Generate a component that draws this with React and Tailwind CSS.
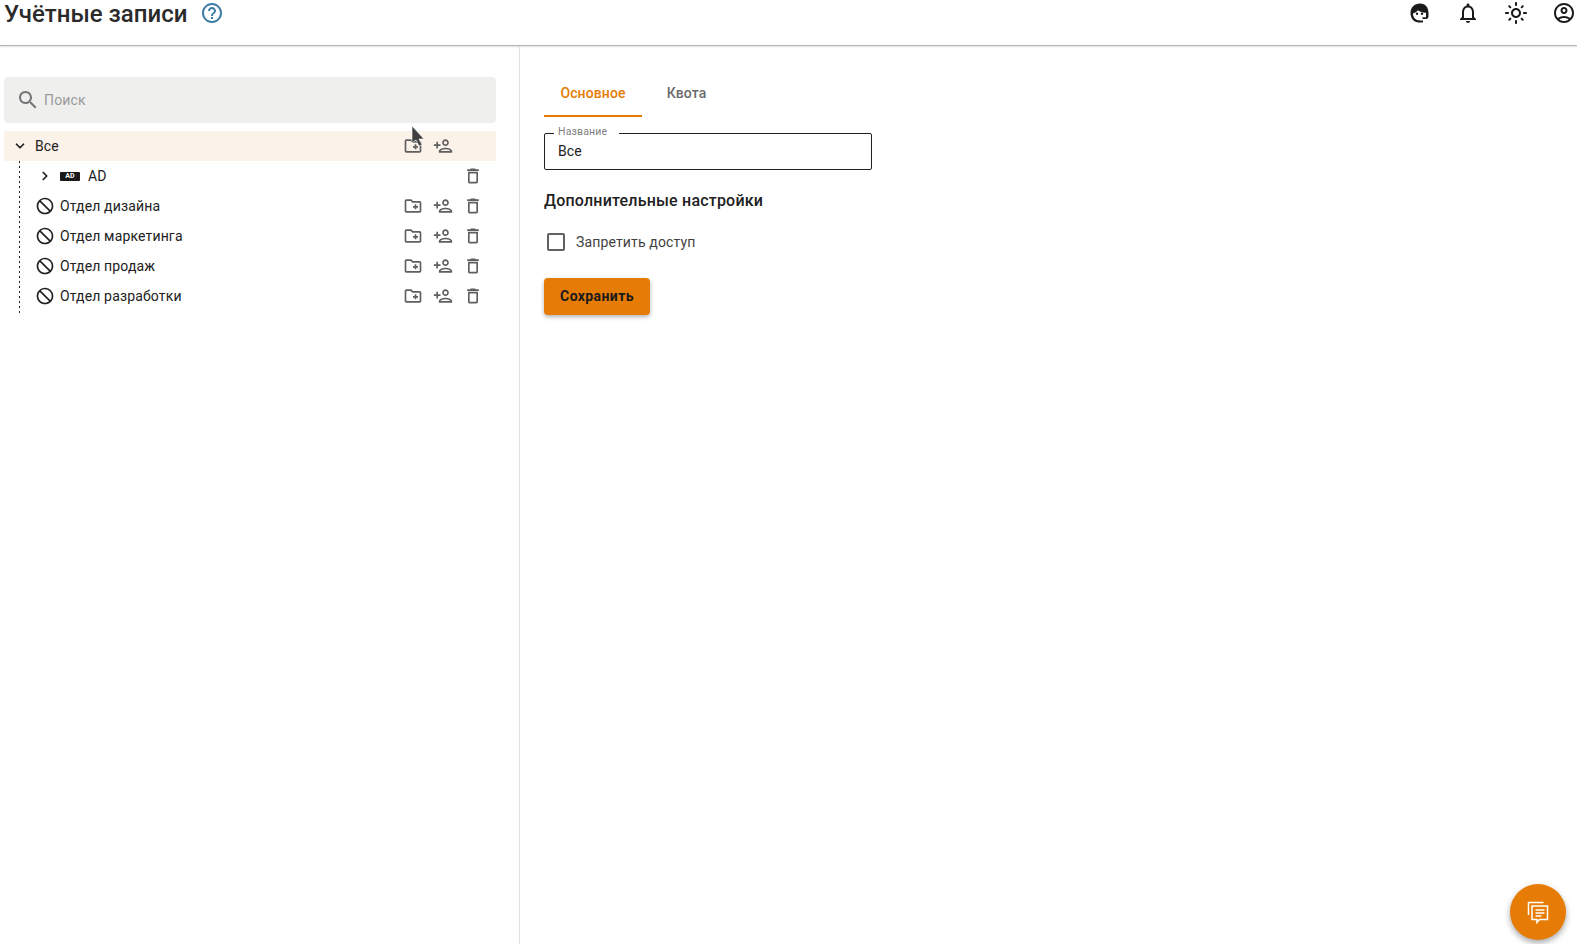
import React from "react";
import { ChevronDown, ChevronRight } from "lucide-react";

const paths = {
  help: "M11 18h2v-2h-2v2zm1-16C6.48 2 2 6.48 2 12s4.48 10 10 10 10-4.48 10-10S17.52 2 12 2zm0 18c-4.41 0-8-3.59-8-8s3.59-8 8-8 8 3.59 8 8-3.59 8-8 8zm0-14c-2.21 0-4 1.79-4 4h2c0-1.1.9-2 2-2s2 .9 2 2c0 2-3 1.75-3 5h2c0-2.25 3-2.5 3-5 0-2.21-1.79-4-4-4z",
  search: "M15.5 14h-.79l-.28-.27C15.41 12.59 16 11.11 16 9.5 16 5.91 13.09 3 9.5 3S3 5.91 3 9.5 5.91 16 9.5 16c1.61 0 3.09-.59 4.23-1.57l.27.28v.79l5 4.99L20.49 19l-4.99-5zm-6 0C7.01 14 5 11.99 5 9.5S7.01 5 9.5 5 14 7.01 14 9.5 11.99 14 9.5 14z",
  bell: "M12 22c1.1 0 2-.9 2-2h-4c0 1.1.9 2 2 2zm6-6v-5c0-3.07-1.63-5.64-4.5-6.32V4c0-.83-.67-1.5-1.5-1.5s-1.5.67-1.5 1.5v.68C7.64 5.36 6 7.92 6 11v5l-2 2v1h16v-1l-2-2zm-2 1H8v-6c0-2.48 1.51-4.5 4-4.5s4 2.02 4 4.5v6z",
  sun: "M12 9c1.65 0 3 1.35 3 3s-1.35 3-3 3-3-1.35-3-3 1.35-3 3-3m0-2c-2.76 0-5 2.24-5 5s2.24 5 5 5 5-2.24 5-5-2.24-5-5-5zM2 13h2c.55 0 1-.45 1-1s-.45-1-1-1H2c-.55 0-1 .45-1 1s.45 1 1 1zm18 0h2c.55 0 1-.45 1-1s-.45-1-1-1h-2c-.55 0-1 .45-1 1s.45 1 1 1zM11 2v2c0 .55.45 1 1 1s1-.45 1-1V2c0-.55-.45-1-1-1s-1 .45-1 1zm0 18v2c0 .55.45 1 1 1s1-.45 1-1v-2c0-.55-.45-1-1-1s-1 .45-1 1zM5.99 4.58c-.39-.39-1.03-.39-1.41 0-.39.39-.39 1.03 0 1.41l1.06 1.06c.39.39 1.03.39 1.41 0s.39-1.03 0-1.41L5.99 4.58zm12.37 12.37c-.39-.39-1.03-.39-1.41 0-.39.39-.39 1.03 0 1.41l1.06 1.06c.39.39 1.03.39 1.41 0 .39-.39.39-1.03 0-1.41l-1.06-1.06zm1.06-10.96c.39-.39.39-1.03 0-1.41-.39-.39-1.03-.39-1.41 0l-1.06 1.06c-.39.39-.39 1.03 0 1.41s1.03.39 1.41 0l1.06-1.06zM7.05 18.36c.39-.39.39-1.03 0-1.41-.39-.39-1.03-.39-1.41 0l-1.06 1.06c-.39.39-.39 1.03 0 1.41s1.03.39 1.41 0l1.06-1.06z",
  account: "M12 2C6.48 2 2 6.48 2 12s4.48 10 10 10 10-4.48 10-10S17.52 2 12 2zM7.35 18.5C8.66 17.56 10.26 17 12 17s3.34.56 4.65 1.5c-1.31.94-2.91 1.5-4.65 1.5s-3.34-.56-4.65-1.5zm10.79-1.38C16.45 15.8 14.32 15 12 15s-4.45.8-6.14 2.12C4.7 15.73 4 13.95 4 12c0-4.42 3.58-8 8-8s8 3.58 8 8c0 1.95-.7 3.73-1.86 5.12zM12 6c-1.93 0-3.5 1.57-3.5 3.5S10.07 13 12 13s3.5-1.57 3.5-3.5S13.93 6 12 6zm0 5c-.83 0-1.5-.67-1.5-1.5S11.17 8 12 8s1.5.67 1.5 1.5S12.83 11 12 11z",
  block: "M12 2C6.48 2 2 6.48 2 12s4.48 10 10 10 10-4.48 10-10S17.52 2 12 2zM4 12c0-4.42 3.58-8 8-8 1.85 0 3.55.63 4.9 1.69L5.69 16.9C4.63 15.55 4 13.85 4 12zm8 8c-1.85 0-3.55-.63-4.9-1.69L18.31 7.1C19.37 8.45 20 10.15 20 12c0 4.42-3.58 8-8 8z",
  folder: "M20 6h-8l-2-2H4c-1.11 0-1.99.89-1.99 2L2 18c0 1.11.89 2 2 2h16c1.11 0 2-.89 2-2V8c0-1.11-.89-2-2-2zm0 12H4V6h5.17l2 2H20v10zm-8-4h2v2h2v-2h2v-2h-2v-2h-2v2h-2v2z",
  person: "M15 12c2.21 0 4-1.79 4-4s-1.79-4-4-4-4 1.79-4 4 1.79 4 4 4zm0-6c1.1 0 2 .9 2 2s-.9 2-2 2-2-.9-2-2 .9-2 2-2zm0 8c-2.67 0-8 1.34-8 4v2h16v-2c0-2.66-5.33-4-8-4zm-6 4c.22-.72 3.31-2 6-2 2.7 0 5.8 1.29 6 2H9zm-3-3v-3h3v-2H6V7H4v3H1v2h3v3h2z",
  trash: "M6 19c0 1.1.9 2 2 2h8c1.1 0 2-.9 2-2V7H6v12zM8 9h8v10H8V9zm7.5-5l-1-1h-5l-1 1H5v2h14V4h-3.5z",
};

const Icon = ({ name, className }) => (
  <svg viewBox="0 0 24 24" fill="currentColor" className={className}>
    <path d={paths[name]} />
  </svg>
);

const AgentIcon = () => (
  <svg viewBox="0 0 24 24" className="h-6 w-6 text-[#1a1a1a]">
    <path d="M12 2.5c-5.500 0-9.500 4-9.500 9.500 0 3 1 5.500 3 7.500 1.700 1.500 4 2 6.500 2h3v-2h-3c-4.500 0-7-3-7-7 .3-.3 3-.7 5-3.200 2 1.700 5 2.700 8 2.500v4.500h-3.500v1.800H18c1.500 0 2.500-1 2.500-2.500V12c0-5.500-3-9.500-8.500-9.500z" fill="currentColor" />
    <circle cx="9" cy="12.800" r="1.200" fill="currentColor" />
    <circle cx="14" cy="12.800" r="1.200" fill="currentColor" />
  </svg>
);

const departments = ["Отдел дизайна", "Отдел маркетинга", "Отдел продаж", "Отдел разработки"];

const RowActions = ({ folder = true, person = true, trash = true }) => (
  <div className="ml-auto flex items-center gap-[10px] pr-[13px] text-[#5f5f5f]">
    {folder ? <Icon name="folder" className="h-5 w-5" /> : <span className="h-5 w-5" />}
    {person ? <Icon name="person" className="h-5 w-5" /> : <span className="h-5 w-5" />}
    {trash ? <Icon name="trash" className="h-5 w-5" /> : <span className="h-5 w-5" />}
  </div>
);

export default function App() {
  return (
    <div className="relative flex h-[944px] flex-col overflow-hidden bg-white font-['Roboto',sans-serif] text-[#212121]">
      {/* Header */}
      <header className="flex h-[46px] shrink-0 items-start border-b border-[#b4b4b4] shadow-[0_1px_2px_rgba(0,0,0,0.12)]">
        <h1 className="ml-[4px] text-2xl font-medium leading-[28px] text-[#2a2a2a]">Учётные записи</h1>
        <Icon name="help" className="ml-[13px] mt-px h-6 w-6 text-[#3a7ca5]" />
        <div className="ml-auto mr-px mt-px flex items-center gap-[24px]">
          <AgentIcon />
          <Icon name="bell" className="h-6 w-6 text-[#1a1a1a]" />
          <Icon name="sun" className="h-6 w-6 text-[#1a1a1a]" />
          <Icon name="account" className="h-6 w-6 text-[#1a1a1a]" />
        </div>
      </header>

      <div className="flex min-h-0 flex-1">
        {/* Tree panel */}
        <aside className="w-[520px] shrink-0 border-r border-[#e0e0e0] pl-[4px] pr-[23px] pt-[31px]">
          <div className="flex h-[46px] items-center rounded-[4px] bg-[#efefee] pl-[12px]">
            <Icon name="search" className="h-6 w-6 text-[#757575]" />
            <span className="ml-[4px] text-sm tracking-[0.15px] text-[#9a9a9a]">Поиск</span>
          </div>

          <div className="mt-[8px] flex h-[30px] items-center bg-[#fbf2ea] text-sm tracking-[0.15px]">
            <ChevronDown className="ml-[9px] h-[14px] w-[14px]" strokeWidth={3} />
            <span className="ml-[8px]">Все</span>
            <RowActions trash={false} />
          </div>

          <div className="relative">
            <div className="absolute bottom-[-5px] left-[15px] top-0 w-px bg-[repeating-linear-gradient(to_bottom,#212121_0,#212121_2px,transparent_2px,transparent_5px)]" />
            <div className="flex h-[30px] items-center text-sm tracking-[0.15px]">
              <ChevronRight className="ml-[34px] h-[14px] w-[14px]" strokeWidth={3} />
              <span className="ml-[8px] flex h-[9px] w-[20px] items-center justify-center rounded-[1px] bg-[#1a1a1a] text-[7px] font-bold leading-none tracking-normal text-white">
                AD
              </span>
              <span className="ml-[8px]">AD</span>
              <RowActions folder={false} person={false} />
            </div>
            {departments.map((dept) => (
              <div key={dept} className="flex h-[30px] items-center text-sm tracking-[0.15px]">
                <Icon name="block" className="ml-[31px] h-5 w-5 -scale-x-100" />
                <span className="ml-[5px]">{dept}</span>
                <RowActions />
              </div>
            ))}
          </div>
        </aside>

        {/* Details panel */}
        <main className="flex-1 pl-[24px] pt-[24px]">
          <div className="flex text-sm font-medium tracking-[0.1px]">
            <div className="flex h-[47px] w-[98px] items-center justify-center border-b-2 border-[#e67c05] text-[#e67c05]">
              Основное
            </div>
            <div className="ml-[8px] flex h-[47px] w-[73px] items-center justify-center border-b-2 border-transparent text-[#6b6b6b]">
              Квота
            </div>
          </div>

          <div className="relative mt-[16px] flex h-[37px] w-[328px] items-center rounded-[2px] border border-[#212121] pb-[2px] pl-[13px] text-sm tracking-[0.15px]">
            Все
            <span className="absolute left-[9px] top-[-9px] bg-white pl-[4px] pr-[12px] text-[10.5px] leading-[13px] text-[#808080]">
              Название
            </span>
          </div>

          <h2 className="mt-[20px] text-base font-medium leading-[22px] tracking-[0.2px]">Дополнительные настройки</h2>

          <label className="mt-[20px] flex items-center text-sm tracking-[0.15px] text-[#424242]">
            <span className="ml-[3px] h-[18px] w-[18px] rounded-[2px] border-2 border-[#616161]" />
            <span className="ml-[11px]">Запретить доступ</span>
          </label>

          <button className="mt-[26px] h-[37px] w-[106px] rounded-[4px] bg-[#e67c05] pb-[2px] text-sm font-bold tracking-[0.4px] text-[#1a1a1a] shadow-[0_2px_4px_rgba(0,0,0,0.3)]">
            Сохранить
          </button>
        </main>
      </div>

      {/* Mouse pointer from the capture */}
      <svg viewBox="0 0 14 24" className="absolute left-[411px] top-[126px] h-[24px] w-[14px]">
        <path d="M1 0v17l4-3 3 6 3-1-3-6h5z" fill="#3f3f3f" stroke="#fff" strokeWidth="0.6" />
      </svg>

      {/* Chat button */}
      <button className="absolute bottom-[4px] right-[11px] flex h-[56px] w-[56px] items-center justify-center rounded-full bg-[#e67c05] text-white shadow-[0_3px_6px_rgba(0,0,0,0.35)]">
        <svg viewBox="0 0 24 24" className="h-6 w-6" fill="none" stroke="currentColor" strokeWidth="1.5">
          <path d="M2.500 15V2.500h15" />
          <path d="M6 6h15.500v13.500h-8L11 22.500v-3H6z" />
          <path d="M9.500 10h9M9.500 13h9M9.500 16h6" />
        </svg>
      </button>
    </div>
  );
}
